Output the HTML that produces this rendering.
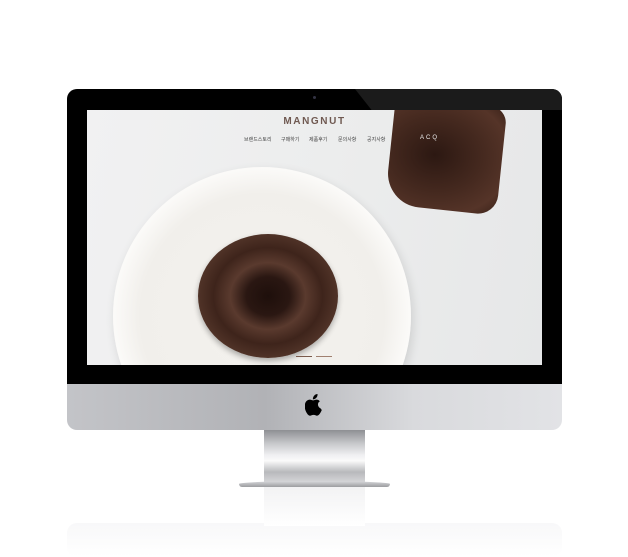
<!DOCTYPE html>
<html><head><meta charset="utf-8"><style>
html,body{margin:0;padding:0;background:#fff;width:628px;height:557px;overflow:hidden;position:relative;font-family:"Liberation Sans","Noto Sans CJK KR",sans-serif}
div{position:absolute;box-sizing:border-box}
.n{top:26px;font-size:5px;color:#444;white-space:nowrap}
</style></head><body>
<div style="left:67px;top:523px;width:495px;height:34px;border-radius:10px;background:linear-gradient(#f8f8f9,#fff)"></div>
<div style="left:264px;top:486px;width:101px;height:40px;background:linear-gradient(#f2f2f3,#fff)"></div>
<div style="left:264px;top:430px;width:101px;height:56px;background:linear-gradient(#8e8f93 0%,#c9cacd 25%,#f0f0f2 45%,#fafafa 55%,#b8b9bc 75%,#e0e0e2 100%)"></div>
<div style="left:239px;top:481px;width:151px;height:6px;border-radius:50% 50% 3px 3px;background:linear-gradient(#d8d9dc,#9c9da0)"></div>
<div style="left:67px;top:89px;width:495px;height:341px;border-radius:10px;background:linear-gradient(90deg,#c3c4c8,#b1b2b6 40%,#d9dadd 70%,#e2e3e6)"></div>
<div style="left:67px;top:89px;width:495px;height:295px;border-radius:10px 10px 0 0;background:#000"></div>
<div style="left:355px;top:89px;width:207px;height:21px;border-radius:0 10px 0 0;background:#1b1b1b;clip-path:polygon(0 0,100% 0,100% 100%,8% 100%)"></div>
<div style="left:313px;top:96px;width:3px;height:3px;border-radius:50%;background:#334"></div>
<div style="left:87px;top:110px;width:455px;height:255px;overflow:hidden;background:linear-gradient(100deg,#f1f1f2,#eceded 50%,#e6e7e8)">
  <div style="left:26px;top:57px;width:298px;height:298px;border-radius:50%;background:radial-gradient(circle at 50% 50%,#f4f2ee 0%,#f1efeb 58%,#fbfaf8 70%,#ecebe8 100%);box-shadow:2px 4px 10px rgba(0,0,0,.12)"></div>
  <div style="left:111px;top:124px;width:140px;height:124px;border-radius:50%;background:radial-gradient(ellipse at 50% 50%,#1e0f0b 0%,#2a1712 22%,#5a3a2e 38%,#3e241b 55%,#55372b 75%,#33201a 100%);box-shadow:0 3px 6px rgba(0,0,0,.3)"></div>
  <div style="left:303px;top:-8px;width:112px;height:108px;border-radius:12px 16px 20px 34px;transform:rotate(6deg);background:radial-gradient(ellipse at 40% 50%,#2c1812,#45291f 50%,#553428 80%,#3a2219)"></div>
  <div style="left:0;top:6px;width:455px;text-align:center;font-size:10px;letter-spacing:1.6px;color:#6f5951;font-weight:bold">MANGNUT</div>
  <div class="n" style="left:157px">브랜드스토리</div>
  <div class="n" style="left:194px">구매하기</div>
  <div class="n" style="left:222px">제품후기</div>
  <div class="n" style="left:251px">문의사항</div>
  <div class="n" style="left:280px">공지사항</div>
  <div style="left:333px;top:25px;font-size:6px;color:#eee;letter-spacing:2px">ACQ</div>
  <div style="left:209px;top:246px;width:16px;height:1px;background:#7a5a4c"></div>
  <div style="left:229px;top:246px;width:16px;height:1px;background:#a08070"></div>
</div>
<svg style="position:absolute;left:305px;top:394px" width="19" height="22" viewBox="0 0 19 22"><path d="M12.5 0c.2 1.5-.4 3-1.3 3.9-.9 1-2.2 1.6-3.3 1.5-.2-1.4.5-2.9 1.3-3.8.9-1 2.3-1.6 3.3-1.6zM16.8 16c-.5 1.1-.7 1.6-1.3 2.6-.9 1.4-2.1 3.1-3.6 3.1-1.3 0-1.7-.9-3.4-.8-1.7 0-2.1.8-3.4.8-1.5 0-2.7-1.6-3.5-3C-.8 14.9-.9 9.9 1.2 7.4 2.2 6.3 3.5 5.6 4.8 5.6c1.4 0 2.2.8 3.4.8 1.1 0 1.8-.8 3.4-.8 1.2 0 2.4.6 3.3 1.7-2.9 1.6-2.4 5.7.5 7z" fill="#000"/></svg>
</body></html>
